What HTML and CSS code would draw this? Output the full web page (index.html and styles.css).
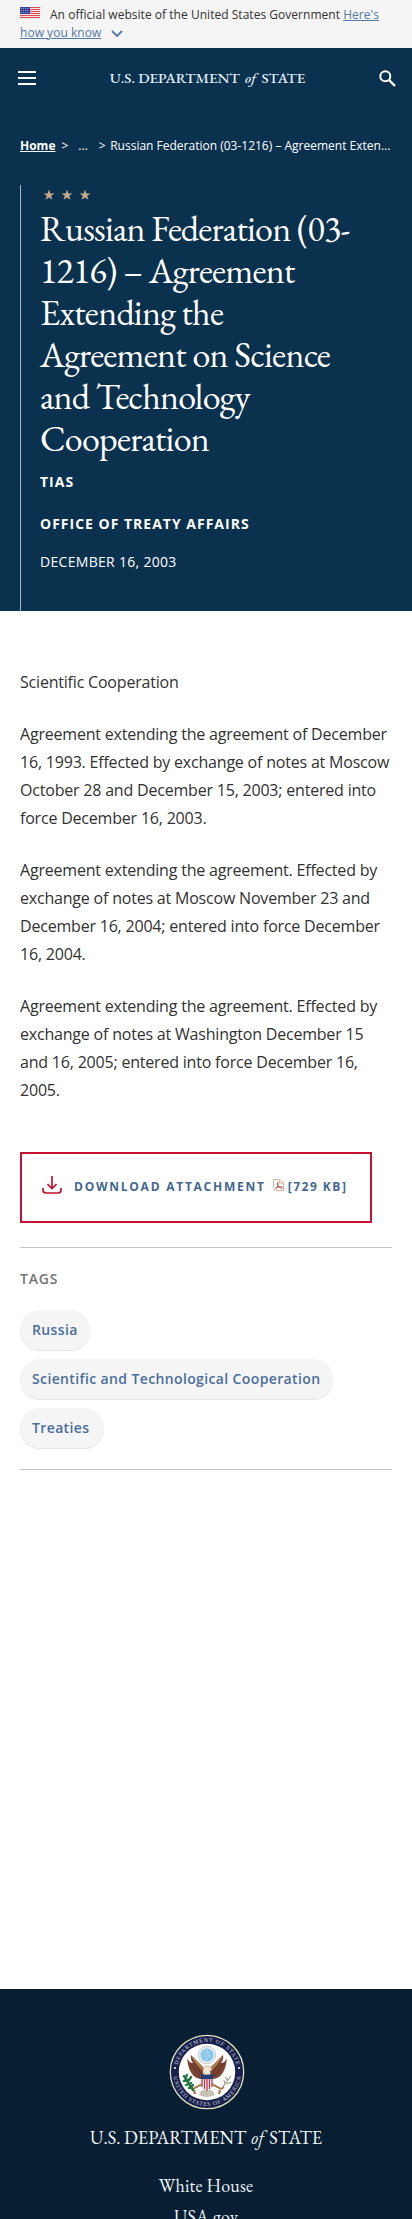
FILE: index.html
```html
<!DOCTYPE html>
<html lang="en">
<head>
<meta charset="utf-8">
<title>Russian Federation (03-1216) – United States Department of State</title>
<link rel="stylesheet" href="styles.css">
</head>
<body>
<div class="banner">
  <svg class="flag" viewBox="0 0 20 12" width="20" height="12"><rect width="20" height="12" fill="#f7e3e3"/><path d="M0 .5h20M0 2.5h20M0 4.5h20M0 6.5h20M0 8.5h20M0 10.5h20" stroke="#dc4e51" stroke-width="1.1"/><rect width="10" height="7" fill="#36429c"/><path d="M1 1.5h8M1 3.5h8M1 5.5h8" stroke="#aeb4dc" stroke-width=".7" stroke-dasharray="1 1"/></svg><span class="banner-text">An official website of the United States Government</span> <a class="know" href="#">Here's<br>how you know</a><svg class="chevron" viewBox="0 0 12 8" width="12" height="8"><path d="M1 1l5 5 5-5" fill="none" stroke="#5578a0" stroke-width="1.8"/></svg>
</div>
<header class="hero">
  <div class="bar">
    <svg class="menu" width="18" height="14" viewBox="0 0 18 14"><path d="M0 1h18M0 7h18M0 13h18" stroke="#fff" stroke-width="2"/></svg>
    <div class="brand">U.S. DEPARTMENT <i>of</i> STATE</div>
    <svg class="search" width="17" height="17" viewBox="0 0 17 17"><circle cx="6.3" cy="6.3" r="5" fill="none" stroke="#fff" stroke-width="2"/><path d="M10 10l6 6" stroke="#fff" stroke-width="2.4"/></svg>
  </div>
  <nav class="crumbs"><a href="#">Home</a><span class="gt">&gt;</span><span class="dots">...</span><span class="gt2">&gt;</span><span class="here">Russian Federation (03-1216) – Agreement Exten...</span></nav>
  <div class="heading">
    <svg class="stars" width="50" height="12" viewBox="0 0 50 12"><g fill="#c7ab8c"><path id="star" d="M6 .5l1.4 3.9h4.1L8.2 6.8l1.2 4L6 8.4l-3.4 2.4 1.2-4L.5 4.4h4.1z"/><use href="#star" x="18"/><use href="#star" x="36"/></g></svg>
    <h1>Russian Federation (03-<br>1216) – Agreement<br>Extending the<br>Agreement on Science<br>and Technology<br>Cooperation</h1>
    <p class="kind">TIAS</p>
    <p class="office">OFFICE OF TREATY AFFAIRS</p>
    <p class="date">DECEMBER 16, 2003</p>
  </div>
</header>
<main>
  <article>
    <p>Scientific Cooperation</p>
    <p>Agreement extending the agreement of December<br>16, 1993. Effected by exchange of notes at Moscow<br>October 28 and December 15, 2003; entered into<br>force December 16, 2003.</p>
    <p>Agreement extending the agreement. Effected by<br>exchange of notes at Moscow November 23 and<br>December 16, 2004; entered into force December<br>16, 2004.</p>
    <p>Agreement extending the agreement. Effected by<br>exchange of notes at Washington December 15<br>and 16, 2005; entered into force December 16,<br>2005.</p>
  </article>
  <a class="download" href="#">
    <svg width="20" height="18" viewBox="0 0 20 18"><path d="M10 0v12M5.5 8.2L10 12.5l4.500-4.300M1 12v2q0 3 3 3h12q3 0 3-3v-2" fill="none" stroke="#bf1630" stroke-width="1.7"/></svg>
    <span class="label">DOWNLOAD ATTACHMENT</span>
    <svg class="pdf" width="11" height="12" viewBox="0 0 11 12"><path d="M.5 9V.5h6l4 3.500v7.500H3M6.500 .5v3.500h4" fill="#fff" stroke="#dcb09c"/><path d="M1 11c2-1 5-5 4-7s-1 2 1 4 4 1 3 0-5 0-6 1" fill="none" stroke="#a94b42" stroke-width=".9"/></svg>
    <span class="size">[729 KB]</span>
  </a>
  <section class="tags">
    <h2>TAGS</h2>
    <div class="pills"><a class="w1" href="#">Russia</a><a class="w2" href="#">Scientific and Technological Cooperation</a><a class="w3" href="#">Treaties</a></div>
  </section>
</main>
<footer>
  <svg class="seal" width="76" height="76" viewBox="0 0 76 76">
    <circle cx="38" cy="38" r="36.700" fill="#18204d" stroke="#e1e3bd" stroke-width="1.300"/>
    <circle cx="38" cy="38" r="28.200" fill="#fff"/>
    <path id="top" d="M8 38a30 30 0 0 1 60 0" fill="none"/>
    <path id="bottom" d="M4 38a34 34 0 0 0 68 0" fill="none"/>
    <g class="seal-text"><text><textPath href="#top" startOffset="50%" text-anchor="middle" textLength="80">DEPARTMENT OF STATE</textPath></text><text><textPath href="#bottom" startOffset="50%" text-anchor="middle" textLength="97">UNITED STATES OF AMERICA</textPath></text></g>
    <g fill="#fff"><circle cx="6" cy="34" r="1"/><circle cx="70" cy="34" r="1"/></g>
    <circle cx="38" cy="21" r="8.700" fill="#e5edf4" stroke="#b4b9b5" stroke-width=".7"/><circle cx="38" cy="21" r="6.500" fill="#85c4ed"/>
    <path d="M34 19h8M33 22h10M36 16h4M36 25h4" stroke="#dcefff" stroke-width="1" stroke-dasharray="1 1"/>
    <path d="M32 45Q20 44 18 24q2 5 6 5-3-4-2-8l12 12 2 6zM44 45q12-1 14-21-2 5-6 5 3-4 2-8L42 33l-2 6z" fill="#7b4330"/>
    <path d="M22 22l11 10 1 5-7-7M54 22L43 32l-1 5 7-7" fill="#ad7d43"/>
    <path d="M22 30l9 13M26 29l6 11M54 30l-9 13M50 29l-6 11" stroke="#4e2c29" stroke-width=".8"/>
    <path d="M33 50l-9 5M43 50l9 5M24 55l-3-2M52 55l3-2M25 56l1 4M51 56l-1 4" stroke="#a36e38" stroke-width="2"/>
    <path d="M32 57q6-4 12 0l2 4q-8 4-16 0z" fill="#c6c2b5"/>
    <path d="M34 40q-1-8 4-8t5 4l-2 1 1 4z" fill="#f0e4d4" stroke="#a37854" stroke-width=".5"/>
    <path d="M32 42h12v9q-1 4-6 6-5-2-6-6z" fill="#fff"/><path d="M33 45v8M35.500 45v10M38 45v12M40.500 45v10M43 45v8" stroke="#b82d43" stroke-width="1.300"/><path d="M32 40l6 1 6-1v5H32z" fill="#253c79"/>
    <path d="M15 42l9 14M15 47l4-1M17 51l5-2M17 43l1-2M20 46l2-3M20 54l4-3" stroke="#237542" stroke-width="2.400" stroke-linecap="round"/>
    <path d="M53 54l9-12M56 51l-1-5M59 47l-3-4M58 50l4-2" stroke="#aa9a88" stroke-width="1.200"/>
  </svg>
  <div class="dept">U.S. DEPARTMENT <i>of</i> STATE</div>
  <a class="fl f1" href="#">White House</a>
  <a class="fl f2" href="#">USA.gov</a>
</footer>
</body>
</html>
```
FILE: styles.css
```css
* { box-sizing: border-box; }
html { height: 2219px; overflow: hidden; }
body { margin: 0; height: 2219px; overflow: hidden; display: flex; flex-direction: column; background: #fff; color: #323232; font-family: "Open Sans", sans-serif; }
h1, h2, p { margin: 0; }
.banner { flex: none; height: 48px; padding: 6px 20px 0; background: #f5f5f5; font-size: 12px; line-height: 18px; letter-spacing: .03px; white-space: nowrap; }
.flag { margin-right: 10px; vertical-align: 0; }
.know { color: #5579a5; }
.chevron { margin-left: 10px; vertical-align: -1px; }
.hero { flex: none; height: 563px; display: flex; flex-direction: column; background: #0a314d; color: #fff; }
.bar { height: 60px; padding: 0 16px 0 18px; display: flex; align-items: center; justify-content: space-between; }
.brand, .dept, h1, .fl { font-family: "EB Garamond", "Liberation Serif", serif; white-space: nowrap; }
.brand { color: #e3f0fa; font-size: 15px; line-height: 20px; font-weight: 500; }
.brand i { margin: 0 2px; }
.crumbs { height: 20px; margin: 28px 20px 0; display: flex; align-items: center; font-size: 12px; line-height: 20px; white-space: nowrap; }
.crumbs a { color: #fff; font-weight: 700; }
.gt { margin-left: 6px; }
.dots { margin-left: 10px; }
.gt2 { margin-left: 11px; }
.here { margin-left: 4.500px; }
.heading { flex: 1; margin: 29px 20px 0; padding-left: 20px; border-left: 1px solid #a7b7c1; }
.stars { display: block; margin: 4px 0 0 2px; }
h1 { margin: 7px 0 0 -1px; font-size: 36px; line-height: 42px; font-weight: 400; letter-spacing: -.75px; }
.kind, .office { font-size: 14px; line-height: 20px; font-weight: 700; letter-spacing: 1px; }
.kind { margin-top: 12px; }
.kind, .office, .date { margin-left: -1px; white-space: nowrap; }
.office { margin-top: 22px; }
.date { margin-top: 18px; font-size: 14px; line-height: 20px; letter-spacing: .3px; }
main { flex: none; height: 1378px; padding: 57px 20px 0; }
article { display: flex; flex-direction: column; gap: 24px; font-size: 16px; line-height: 28px; letter-spacing: -.2px; white-space: nowrap; }
.download { display: flex; align-items: flex-start; width: 352px; height: 71px; margin-top: 48px; padding: 22px 0 0 20px; border: 2px solid #c41230; color: #44678f; text-decoration: none; font-size: 12px; line-height: 20px; font-weight: 700; white-space: nowrap; }
.label { margin: 1px 0 0 12px; letter-spacing: 1.750px; }
.pdf { margin: 3px 0 0 7px; }
.size { margin: 1px 0 0 4px; letter-spacing: 1.500px; }
.tags { margin-top: 24px; height: 223px; border-top: 1px solid #c4c4c4; border-bottom: 1px solid #c4c4c4; }
h2 { padding-top: 21px; font-size: 14px; line-height: 20px; font-weight: 600; letter-spacing: .8px; color: #757575; }
.pills { margin-top: 21px; display: flex; flex-direction: column; align-items: flex-start; gap: 9px; }
.pills a { height: 40px; padding: 0 12px; border-radius: 20px; background: #f5f5f5; box-shadow: 0 1px 1px #e3e3e3; color: #4b6e9c; font-size: 14px; line-height: 40px; font-weight: 600; text-decoration: none; white-space: nowrap; letter-spacing: .37px; }
.w1 { width: 70px; }
.w2 { width: 313px; }
.w3 { width: 84px; }
footer { flex: 1; background: #081f33; color: #f3f8fc; text-align: center; display: flex; flex-direction: column; align-items: center; overflow: hidden; }
.seal { flex: none; margin: 45px 0 0 2px; }
.seal-text { font-family: "Liberation Serif", serif; font-size: 5.700px; fill: #d3d7df; }
.dept { margin-top: 16px; font-size: 18.300px; line-height: 24px; }
.dept i { margin: 0 1.500px; }
.fl { color: #edf5fa; text-decoration: none; font-size: 18px; line-height: 31px; letter-spacing: .2px; }
.f1 { margin-top: 20px; }
```
